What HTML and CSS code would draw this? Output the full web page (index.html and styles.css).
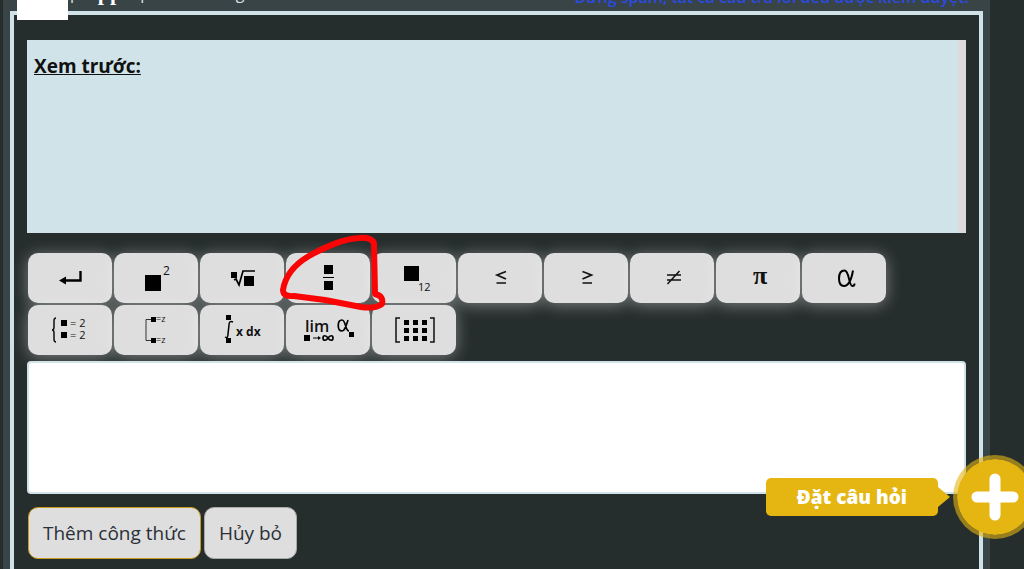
FILE: index.html
```html
<!DOCTYPE html>
<html lang="vi">

<head>
    <meta charset="UTF-8">
    <meta name="viewport" content="width=device-width, initial-scale=1.0">
    <title>Thêm công thức</title>
    <link rel="stylesheet" href="styles.css">
</head>

<body>
    <div class="page">
        <header class="top-bar">
            <div class="hints"><span>p</span><b>pp</b><span>phân số trong</span></div>
            <div class="notice">Đừng spam, tất cả câu trả lời đều được kiểm duyệt.</div>
            <div class="blank"></div>
        </header>

        <main class="panel">
            <section class="preview">
                <h2>Xem trước:</h2>
            </section>

            <div class="toolbar">
                <button type="button" class="key" aria-label="Xuống dòng">
                    <svg viewBox="0 0 84 50"><path d="M52.500 18V27.500H36" fill="none" stroke="#000" stroke-width="2.400"/><path d="M31 27.500l7-4v8z"/></svg>
                </button>
                <button type="button" class="key" aria-label="Lũy thừa">
                    <svg viewBox="0 0 84 50"><path d="M31 22h16v16H31z"/><text x="49" y="22" class="t12">2</text></svg>
                </button>
                <button type="button" class="key" aria-label="Căn bậc n">
                    <svg viewBox="0 0 84 50"><path d="M31 19h6v6h-6zM44 23h10v10H44z"/><path d="M34 27l2-1 3 6 4-14h12" fill="none" stroke="#000" stroke-width="1.700"/></svg>
                </button>
                <button type="button" class="key" aria-label="Phân số">
                    <svg viewBox="0 0 84 50"><path d="M38 12h9v9h-9zM38 28h9v9h-9zM37 24h11v1H37z"/></svg>
                </button>
                <button type="button" class="key" aria-label="Chỉ số dưới">
                    <svg viewBox="0 0 84 50"><path d="M32 13h15v15H32z"/><text x="46" y="38" class="t11">12</text></svg>
                </button>
                <button type="button" class="key" aria-label="Nhỏ hơn hoặc bằng">
                    <svg viewBox="0 0 84 50"><path d="M48 18.500l-9 3.500 9 4M38.500 30h9.500" fill="none" stroke="#111" stroke-width="1.700"/></svg>
                </button>
                <button type="button" class="key" aria-label="Lớn hơn hoặc bằng">
                    <svg viewBox="0 0 84 50"><path d="M38.500 18.500l9 3.500-9 4M38.500 30h9.500" fill="none" stroke="#111" stroke-width="1.700"/></svg>
                </button>
                <button type="button" class="key" aria-label="Khác">
                    <svg viewBox="0 0 84 50"><path d="M37 22h14M37 27h14M37.500 31l12-13" fill="none" stroke="#111" stroke-width="1.500"/></svg>
                </button>
                <button type="button" class="key" aria-label="Pi">
                    <svg viewBox="0 0 84 50"><text x="44" y="31" class="pi">π</text></svg>
                </button>
                <button type="button" class="key" aria-label="Alpha">
                    <svg viewBox="0 0 84 50"><path d="M51 17.500C49.500 26 46.500 33 42 33 38 33 37 29.500 37 25.500 37 21 38.500 17.500 42.500 17.500c5 0 4 15.500 8 15.500 1.500 0 2-1 2-2.500" fill="none" stroke="#000" stroke-width="2"/></svg>
                </button>
                <button type="button" class="key" aria-label="Hệ phương trình">
                    <svg viewBox="0 0 84 50"><path d="M28 13q-2 0-2 3v6q0 3-2 3 2 0 2 3v6q0 3 2 3" fill="none" stroke="#111" stroke-width="1.500"/><path d="M33 15h6v6h-6zM33 27h6v6h-6z"/><text x="42" y="22" class="t11">= 2</text><text x="42" y="34" class="t11">= 2</text></svg>
                </button>
                <button type="button" class="key" aria-label="Hệ hoặc">
                    <svg viewBox="0 0 84 50"><path d="M37 14.500h-5v21h5" fill="none" stroke="#333"/><path d="M37 12h5v5h-5zM37 33h5v5h-5z"/><text x="42" y="17" class="t9">=z</text><text x="42" y="38" class="t9">=z</text></svg>
                </button>
                <button type="button" class="key" aria-label="Tích phân">
                    <svg viewBox="0 0 84 50"><path d="M26 10h5v5h-5zM26 33h5v5h-5z"/><path d="M33 17q-4-2-4 3l-1 9q0 5-3 3" fill="none" stroke="#000" stroke-width="1.500"/><text x="36" y="31" class="t12 bold">x dx</text></svg>
                </button>
                <button type="button" class="key" aria-label="Giới hạn">
                    <svg viewBox="0 0 84 50"><text x="19" y="27" class="t16 semi">lim</text><path d="M18 30h6v6h-6zM63 27h5v5h-5z"/><path d="M27 33h6" fill="none" stroke="#000"/><path d="M35 33l-3-2v4z"/><path d="M42 33c-2-3-5-3-5 0s3 3 5 0 5-3 5 0-3 3-5 0z" fill="none" stroke="#000" stroke-width="1.700"/><path d="M62 15c-2 6-3 11-6 11-5 0-5-11 0-11 4 0 3 11 7 11" fill="none" stroke="#000" stroke-width="1.700"/></svg>
                </button>
                <button type="button" class="key" aria-label="Ma trận">
                    <svg viewBox="0 0 84 50"><path d="M28 13h-4v24h4M58 13h4v24h-4" fill="none" stroke="#111" stroke-width="1.500"/><path d="M32 15h5v5h-5zm9 0h5v5h-5zm9 0h5v5h-5zM32 23h5v5h-5zm9 0h5v5h-5zm9 0h5v5h-5zM32 31h5v5h-5zm9 0h5v5h-5zm9 0h5v5h-5z"/></svg>
                </button>

                <!-- hand-drawn ring around the fraction key -->
                <svg class="mark" viewBox="0 0 112 80"><path d="M97 12C98 6 88 4 83 5 67 5 44 16 32 23 15 33 8 44 6 57q0 7 11 6l31 4 36 7q15 2 21-3 2-8-7-10l-1-49" /></svg>
            </div>

            <textarea class="formula" aria-label="Công thức"></textarea>

            <div class="actions">
                <button type="button" class="action primary">Thêm công thức</button>
                <button type="button" class="action">Hủy bỏ</button>
            </div>
        </main>
    </div>

    <div class="ask">
        <a href="#" class="ask-label">Đặt câu hỏi</a>
        <button type="button" class="ask-button" aria-label="Thêm">
            <svg viewBox="0 0 76 76"><path d="M38 20v36M20 38h36" stroke="#fff" stroke-width="11" stroke-linecap="round"/></svg>
        </button>
    </div>
</body>

</html>
```
FILE: styles.css
```css
* {
    box-sizing: border-box;
}

body {
    margin: 0;
    background: #262d2d;
    font-family: "Open Sans", "Noto Sans", sans-serif;
    overflow: hidden;
}

.page {
    display: flex;
    flex-direction: column;
    min-height: 100vh;
    margin: 0 34px 0 3px;
    padding: 0 7px;
    background: #384446;
}

.top-bar {
    display: flex;
    justify-content: space-between;
    align-items: flex-end;
    position: relative;
    height: 11px;
    padding: 0 14px 0 60px;
    font-size: 16px;
    line-height: 24px;
    white-space: nowrap;
}

.hints {
    display: flex;
    gap: 18px;
    line-height: 20px;
    margin-bottom: 8px;
    color: #dde3e4;
}

.hints b {
    font-family: "Liberation Serif", serif;
    font-size: 22px;
    color: #fff;
}

.notice {
    color: #2b4be0;
    font-weight: 600;
    margin-bottom: 2px;
}

.blank {
    position: absolute;
    top: 0;
    left: 7px;
    width: 51px;
    height: 20px;
    background: #fff;
}

.panel {
    flex: 1;
    border: 4px solid #cfe2e7;
    border-bottom: 0;
    padding: 25px 13px 0;
    background: #262d2d;
}

.preview {
    height: 193px;
    padding: 13px 7px;
    background: #cfe3e8;
    border-right: 8px solid #dcdadb;
}

.preview h2 {
    margin: 0;
    font-size: 19px;
    line-height: 26px;
    font-weight: 700;
    color: #111;
    text-decoration: underline;
}

.toolbar {
    display: flex;
    flex-wrap: wrap;
    gap: 2px;
    position: relative;
    max-width: 880px;
    margin: 20px 0 6px;
    padding-left: 1px;
}

.key {
    width: 84px;
    height: 50px;
    padding: 0;
    border: 0;
    border-radius: 10px;
    background: #dedede;
    box-shadow: 0 2px 16px rgba(255, 255, 255, 0.4);
    cursor: pointer;
}

.key svg {
    display: block;
    width: 100%;
    height: 100%;
}

.key text {
    font-family: "Open Sans", sans-serif;
    fill: #111;
}

.key .t9 {
    font-size: 9px;
}

.key .t11 {
    font-size: 11px;
}

.key .t12 {
    font-size: 12px;
}

.key .t16 {
    font-size: 16px;
}

.key .semi {
    font-weight: 600;
}

.key .bold {
    font-weight: 700;
}

.key .pi {
    font-family: "Liberation Serif", serif;
    font-size: 26px;
    font-weight: 700;
    text-anchor: middle;
}

.mark {
    position: absolute;
    top: -20px;
    left: 250px;
    width: 112px;
    height: 80px;
    pointer-events: none;
}

.mark path {
    fill: none;
    stroke: #f90505;
    stroke-width: 6;
    stroke-linecap: round;
    stroke-linejoin: round;
}

.formula {
    display: block;
    width: 100%;
    height: 133px;
    border: 2px solid #cfe2e7;
    border-radius: 4px;
    background: #fff;
    resize: none;
}

.actions {
    display: flex;
    gap: 3px;
    padding: 13px 1px;
}

.action {
    height: 52px;
    padding: 0 14px;
    border: 1px solid #aaa;
    border-radius: 10px;
    background: #dedede;
    color: #2b3038;
    font-family: inherit;
    font-size: 19px;
    cursor: pointer;
}

.action.primary {
    border-color: #c99b1c;
}

.ask {
    display: flex;
    align-items: center;
    gap: 15px;
    position: fixed;
    right: -13px;
    bottom: 30px;
}

.ask-label {
    position: relative;
    padding: 0 31px;
    border-radius: 5px;
    background: #e5b612;
    color: #fff;
    font-size: 19px;
    font-weight: 800;
    line-height: 38px;
    text-decoration: none;
}

.ask-label::after {
    content: "";
    position: absolute;
    top: 9px;
    left: 100%;
    border: 10px solid transparent;
    border-left: 12px solid #e5b612;
    border-right: 0;
}

.ask-button {
    width: 84px;
    height: 84px;
    padding: 0;
    border: 4px solid rgba(229, 182, 18, 0.6);
    border-radius: 50%;
    background: #e5b612;
    background-clip: padding-box;
    cursor: pointer;
}

.ask-button svg {
    display: block;
    width: 100%;
}
```
